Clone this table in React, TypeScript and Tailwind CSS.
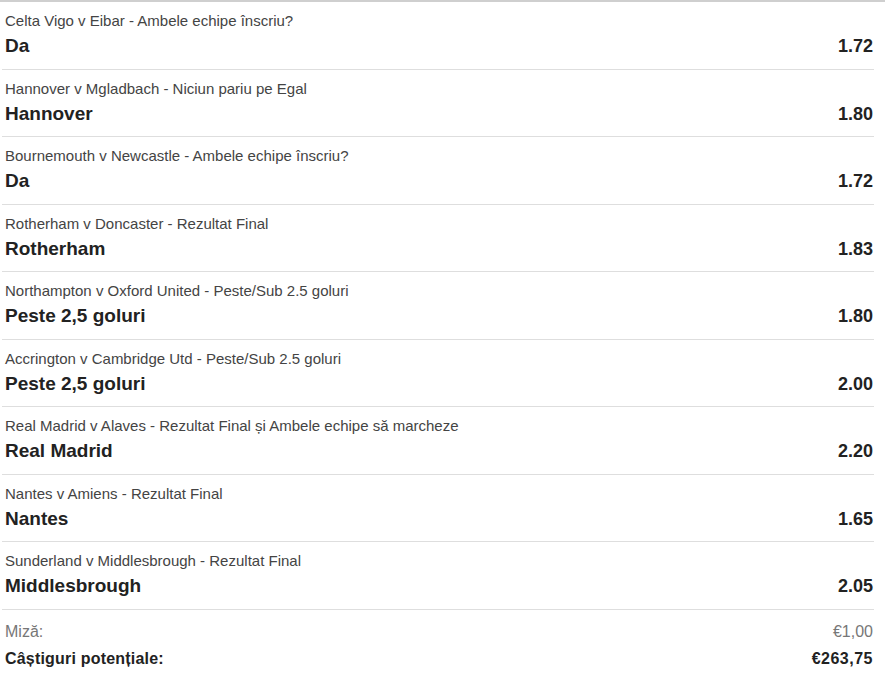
import React from "react";

type Bet = { match: string; pick: string; odds: string };

const bets: Bet[] = [
  { match: "Celta Vigo v Eibar - Ambele echipe înscriu?", pick: "Da", odds: "1.72" },
  { match: "Hannover v Mgladbach - Niciun pariu pe Egal", pick: "Hannover", odds: "1.80" },
  { match: "Bournemouth v Newcastle - Ambele echipe înscriu?", pick: "Da", odds: "1.72" },
  { match: "Rotherham v Doncaster - Rezultat Final", pick: "Rotherham", odds: "1.83" },
  { match: "Northampton v Oxford United - Peste/Sub 2.5 goluri", pick: "Peste 2,5 goluri", odds: "1.80" },
  { match: "Accrington v Cambridge Utd - Peste/Sub 2.5 goluri", pick: "Peste 2,5 goluri", odds: "2.00" },
  { match: "Real Madrid v Alaves - Rezultat Final și Ambele echipe să marcheze", pick: "Real Madrid", odds: "2.20" },
  { match: "Nantes v Amiens - Rezultat Final", pick: "Nantes", odds: "1.65" },
  { match: "Sunderland v Middlesbrough - Rezultat Final", pick: "Middlesbrough", odds: "2.05" },
];

export default function App() {
  return (
    <main
      className="w-[885px] h-[678px] bg-white overflow-hidden border-t-2 border-[#cfcfcf]"
      style={{ fontFamily: '"Liberation Sans", Arial, sans-serif' }}
    >
      <div className="ml-[2px] w-[872px]">
        {bets.map((b, i) => (
          <div key={i} className="h-[67.5px] border-b border-[#dedede] pt-[10px] pl-[3px] pr-[1px]">
            <div className="text-[15px] leading-[18px] text-[#444]">{b.match}</div>
            <div className="mt-[4px] flex items-baseline justify-between leading-[24px] font-bold text-[#222]">
              <span className="text-[19px]">{b.pick}</span>
              <span className="text-[18px]">{b.odds}</span>
            </div>
          </div>
        ))}

        {/* Totals */}
        <div className="pt-[12px] pl-[3px] pr-[1px]">
          <div className="flex justify-between text-[16px] leading-[20px] text-[#777]">
            <span>Miză:</span>
            <span>€1,00</span>
          </div>
          <div className="mt-[7px] flex justify-between text-[16px] leading-[20px] font-bold text-[#222]">
            <span className="tracking-[0.2px]">Câștiguri potențiale:</span>
            <span className="tracking-[0.5px]">€263,75</span>
          </div>
        </div>
      </div>
    </main>
  );
}
